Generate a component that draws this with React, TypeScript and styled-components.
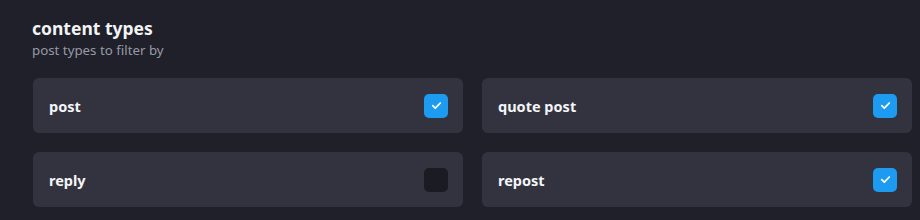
import styled, { createGlobalStyle } from "styled-components";

const GlobalStyle = createGlobalStyle`
  html, body {
    margin: 0;
    background-color: #1f2029;
  }
  body {
    font-family: "Noto Sans", "Open Sans", sans-serif;
  }
`;

interface ContentType {
  label: string;
  checked: boolean;
}

const types: ContentType[] = [
  { label: "post", checked: true },
  { label: "quote post", checked: true },
  { label: "reply", checked: false },
  { label: "repost", checked: true },
];

function Check({ checked }: { checked: boolean }) {
  return (
    <Box $checked={checked}>
      {checked && (
        <svg width="13" height="13" viewBox="0 0 12 12" fill="none">
          <path
            d="M2.5 6.2 L4.9 8.5 L9.5 3.7"
            stroke="#fff"
            strokeWidth="1.6"
            strokeLinecap="round"
            strokeLinejoin="round"
          />
        </svg>
      )}
    </Box>
  );
}

function App() {
  return (
    <Page>
      <GlobalStyle />
      <Header>
        <Title>content types</Title>
        <Subtitle>post types to filter by</Subtitle>
      </Header>
      <Grid>
        {types.map((t) => (
          <Card key={t.label}>
            <Label>{t.label}</Label>
            <Check checked={t.checked} />
          </Card>
        ))}
      </Grid>
    </Page>
  );
}

export default App;

const Page = styled.div`
  width: 920px;
  height: 220px;
  box-sizing: border-box;
  padding: 17px 8px 0 33px;
  overflow: hidden;
`;

const Header = styled.div`
  display: flex;
  flex-direction: column;
  gap: 2px;
  margin-left: -1px;
  margin-bottom: 19px;
`;

const Title = styled.h3`
  margin: 0;
  font-size: 17.5px;
  font-weight: 700;
  line-height: 22px;
  color: #f2f3f5;
`;

const Subtitle = styled.p`
  margin: 0;
  font-size: 13.3px;
  line-height: 18px;
  color: #979aa6;
`;

const Grid = styled.div`
  display: grid;
  grid-template-columns: 430px 430px;
  column-gap: 19px;
  row-gap: 19px;
`;

const Card = styled.div`
  display: flex;
  align-items: center;
  justify-content: space-between;
  height: 55px;
  padding: 0 15px 0 16px;
  border-radius: 6px;
  background-color: #32333f;
`;

const Label = styled.span`
  font-size: 14.5px;
  font-weight: 700;
  color: #f4f5f7;
`;

const Box = styled.div<{ $checked: boolean }>`
  display: flex;
  align-items: center;
  justify-content: center;
  width: 24px;
  height: 24px;
  border-radius: 5px;
  background-color: ${({ $checked }) => ($checked ? "#1d9bf0" : "#1b1c23")};
`;
